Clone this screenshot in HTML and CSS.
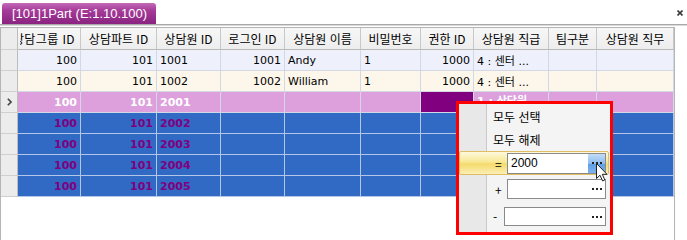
FILE: index.html
```html
<!DOCTYPE html>
<html lang="ko">
<head>
  <meta charset="UTF-8">
  <title>[101]1Part</title>
  <link rel="stylesheet" href="styles.css">
</head>
<body>
  <div class="window">
    <div class="tabbar">
      <div class="tab">[101]1Part (E:1.10.100)</div>
      <svg class="close" width="6" height="6" viewBox="0 0 6 6"><path d="M0.5 0.5L5.5 5.5M5.5 0.5L0.5 5.5" stroke="#3a3a3a" stroke-width="1.6"/></svg>
    </div>
    <div class="grid">
      <table class="list">
        <colgroup>
          <col style="width:17px"><col style="width:63px"><col style="width:76px"><col style="width:64px">
          <col style="width:64px"><col style="width:76px"><col style="width:60px"><col style="width:53px">
          <col style="width:75px"><col style="width:48px"><col style="width:77px">
        </colgroup>
        <thead>
          <tr>
            <th class="rh"></th>
            <th><div class="hclip"><span>상담그룹 ID</span></div></th>
            <th>상담파트 ID</th>
            <th>상담원 ID</th>
            <th>로그인 ID</th>
            <th>상담원 이름</th>
            <th>비밀번호</th>
            <th>권한 ID</th>
            <th>상담원 직급</th>
            <th>팀구분</th>
            <th>상담원 직무</th>
          </tr>
        </thead>
        <tbody>
          <tr class="odd">
            <td class="rh"></td><td class="num">100</td><td class="num">101</td><td>1001</td>
            <td class="num">1001</td><td>Andy</td><td>1</td><td class="num">1000</td>
            <td>4 : 센터 ...</td><td></td><td></td>
          </tr>
          <tr class="even">
            <td class="rh"></td><td class="num">100</td><td class="num">101</td><td>1002</td>
            <td class="num">1002</td><td>William</td><td>1</td><td class="num">1000</td>
            <td>4 : 센터 ...</td><td></td><td></td>
          </tr>
          <tr class="current">
            <td class="rh"><svg width="5" height="8" viewBox="0 0 5 8"><path d="M0.8 0.8L4 4L0.8 7.2" fill="none" stroke="#444" stroke-width="1.6"/></svg></td>
            <td class="num">100</td><td class="num">101</td><td>2001</td>
            <td></td><td></td><td></td><td class="focus"></td>
            <td><div class="peek">1 : 상담원</div></td><td></td><td></td>
          </tr>
          <tr class="sel">
            <td class="rh"></td><td class="num">100</td><td class="num">101</td><td>2002</td>
            <td></td><td></td><td></td><td></td><td></td><td></td><td></td>
          </tr>
          <tr class="sel">
            <td class="rh"></td><td class="num">100</td><td class="num">101</td><td>2003</td>
            <td></td><td></td><td></td><td></td><td></td><td></td><td></td>
          </tr>
          <tr class="sel">
            <td class="rh"></td><td class="num">100</td><td class="num">101</td><td>2004</td>
            <td></td><td></td><td></td><td></td><td></td><td></td><td></td>
          </tr>
          <tr class="sel">
            <td class="rh"></td><td class="num">100</td><td class="num">101</td><td>2005</td>
            <td></td><td></td><td></td><td></td><td></td><td></td><td></td>
          </tr>
        </tbody>
      </table>
    </div>

    <!-- filter popup -->
    <div class="popup">
      <div class="item">모두 선택</div>
      <div class="item">모두 해제</div>
      <div class="frow eq">
        <span class="op">=</span>
        <div class="box"><span class="val">2000</span><span class="dots hot"><i></i><i></i><i></i></span></div>
      </div>
      <div class="frow plus">
        <span class="op">+</span>
        <div class="box"><span class="val"></span><span class="dots"><i></i><i></i><i></i></span></div>
      </div>
      <div class="frow minus">
        <span class="op">-</span>
        <div class="box"><span class="val"></span><span class="dots"><i></i><i></i><i></i></span></div>
      </div>
    </div>

    <svg class="cursor" width="12" height="19" viewBox="0 0 12 19"><path d="M0.5 0.5L0.5 15.5L4 12.2L6.6 18L8.8 17L6.3 11.3L11 11.3Z" fill="#fff" stroke="#222" stroke-width="1"/></svg>
  </div>
</body>
</html>
```

FILE: styles.css
```css
body{
  margin:0;
  background:#fff;
  font-family:"DejaVu Sans","Noto Sans CJK KR",sans-serif;
  font-size:11px;
  color:#000;
}
.window{
  position:relative;
  width:687px;
  height:240px;
  overflow:hidden;
}
.tabbar{
  display:flex;
  align-items:flex-end;
  height:24px;
  padding-left:2px;
  border-bottom:1px solid #a9a9a9;
  box-shadow:0 1px 0 #dadada;
}
.tab{
  width:154px;
  height:21px;
  box-sizing:border-box;
  padding-left:10px;
  line-height:21px;
  color:#fff;
  font-family:"Liberation Sans",sans-serif;
  font-size:13px;
  border-radius:3px 3px 0 0;
  background:linear-gradient(#c36ab7,#a63c99 35%,#962e8b 70%,#8a2480);
}
.close{
  align-self:flex-start;
  margin:10px 4px 0 auto;
}
.grid{
  margin-top:2px;
  width:673px;
  height:220px;
  border:1px solid #b5b5b5;
  border-bottom:none;
}
.list{
  table-layout:fixed;
  border-collapse:separate;
  border-spacing:0;
  width:673px;
}
.list th{
  height:21px;
  padding:0 2px;
  background:linear-gradient(#f7f7f7,#ededed);
  border-right:1px solid #c8c8c8;
  border-bottom:1px solid #b9b9b9;
  font-family:"Noto Sans CJK KR",sans-serif;
  font-size:12px;
  font-weight:normal;
  white-space:nowrap;
  overflow:hidden;
}
.hclip{ /* header text scrolled off to the left */
  display:flex;
  justify-content:flex-end;
  overflow:hidden;
  padding-right:3px;
}
.hclip span{
  flex:none;
  letter-spacing:0.4px;
}
.list td{
  height:20px;
  padding:0 3px;
  border-right:1px solid #d2d8e6;
  border-bottom:1px solid #d2d8e6;
  white-space:nowrap;
  overflow:hidden;
}
.list td.num{
  text-align:right;
}
.odd td{ background:#eef1fb; }
.even td{ background:#fdf6ea; }
.current td{
  background:#dda0dd;
  color:#fff;
  font-weight:bold;
}
.current td.focus{ background:#800080; }
.peek{
  height:10px;
  overflow:hidden;
  line-height:20px;
  margin-top:-10px;
}
.sel td{
  background:#316ac5;
  color:#800080;
  font-weight:bold;
  border-color:#b3c6e8;
}
.list td.rh,.list th.rh{
  padding:0;
  text-align:center;
  background:#ececec;
  border-right:1px solid #bdbdbd;
  border-bottom:1px solid #cfcfcf;
}
.list td.rh svg{ display:block; margin:0 auto; }

/* filter popup */
.popup{
  position:absolute;
  left:456px;
  top:101px;
  width:157px;
  height:134px;
  box-sizing:border-box;
  padding-top:1px;
  border:3px solid #f00;
  background:linear-gradient(to right,#e8e8e8 27px,#c9c9c9 27px 28px,#f4f4f4 28px);
  font-family:"Noto Sans CJK KR",sans-serif;
  font-size:12px;
}
.item{
  height:23px;
  line-height:23px;
  padding-left:34px;
}
.frow{
  display:flex;
  align-items:center;
  box-sizing:border-box;
}
.op{ display:block; }
.eq{
  height:24px;
  margin-right:1px;
  padding-left:35px;
  border:1px solid #e0be66;
  border-radius:2px;
  background:linear-gradient(#fdf9dd,#f9e894 45%,#f5da6c 55%,#fbefb6);
}
.eq .op,.plus .op{ width:12px; }
.eq .box{ height:21px; margin-right:2px; }
.plus{
  height:24px;
  margin-top:2px;
  padding-left:36px;
}
.plus .box{ height:20px; margin-right:4px; }
.minus{
  height:23px;
  margin-top:4px;
  padding-left:34px;
}
.minus .op{ width:11px; }
.minus .box{ height:19px; margin-right:4px; }
.box{
  flex:1;
  display:flex;
  box-sizing:border-box;
  border:1px solid #8a8a8a;
  background:#fff;
}
.val{
  flex:1;
  padding-left:3px;
  font-family:"Liberation Sans",sans-serif;
  font-size:12px;
  line-height:19px;
}
.dots{
  width:17px;
  display:flex;
  align-items:center;
  justify-content:center;
  gap:2px;
}
.dots i{
  width:2px;
  height:2px;
  background:#222;
}
.dots.hot{
  background:linear-gradient(#c3dcf7,#8dbcef 50%,#5d9de6 52%,#7fb3ee);
}
.cursor{
  position:absolute;
  left:596px;
  top:163px;
}
```
